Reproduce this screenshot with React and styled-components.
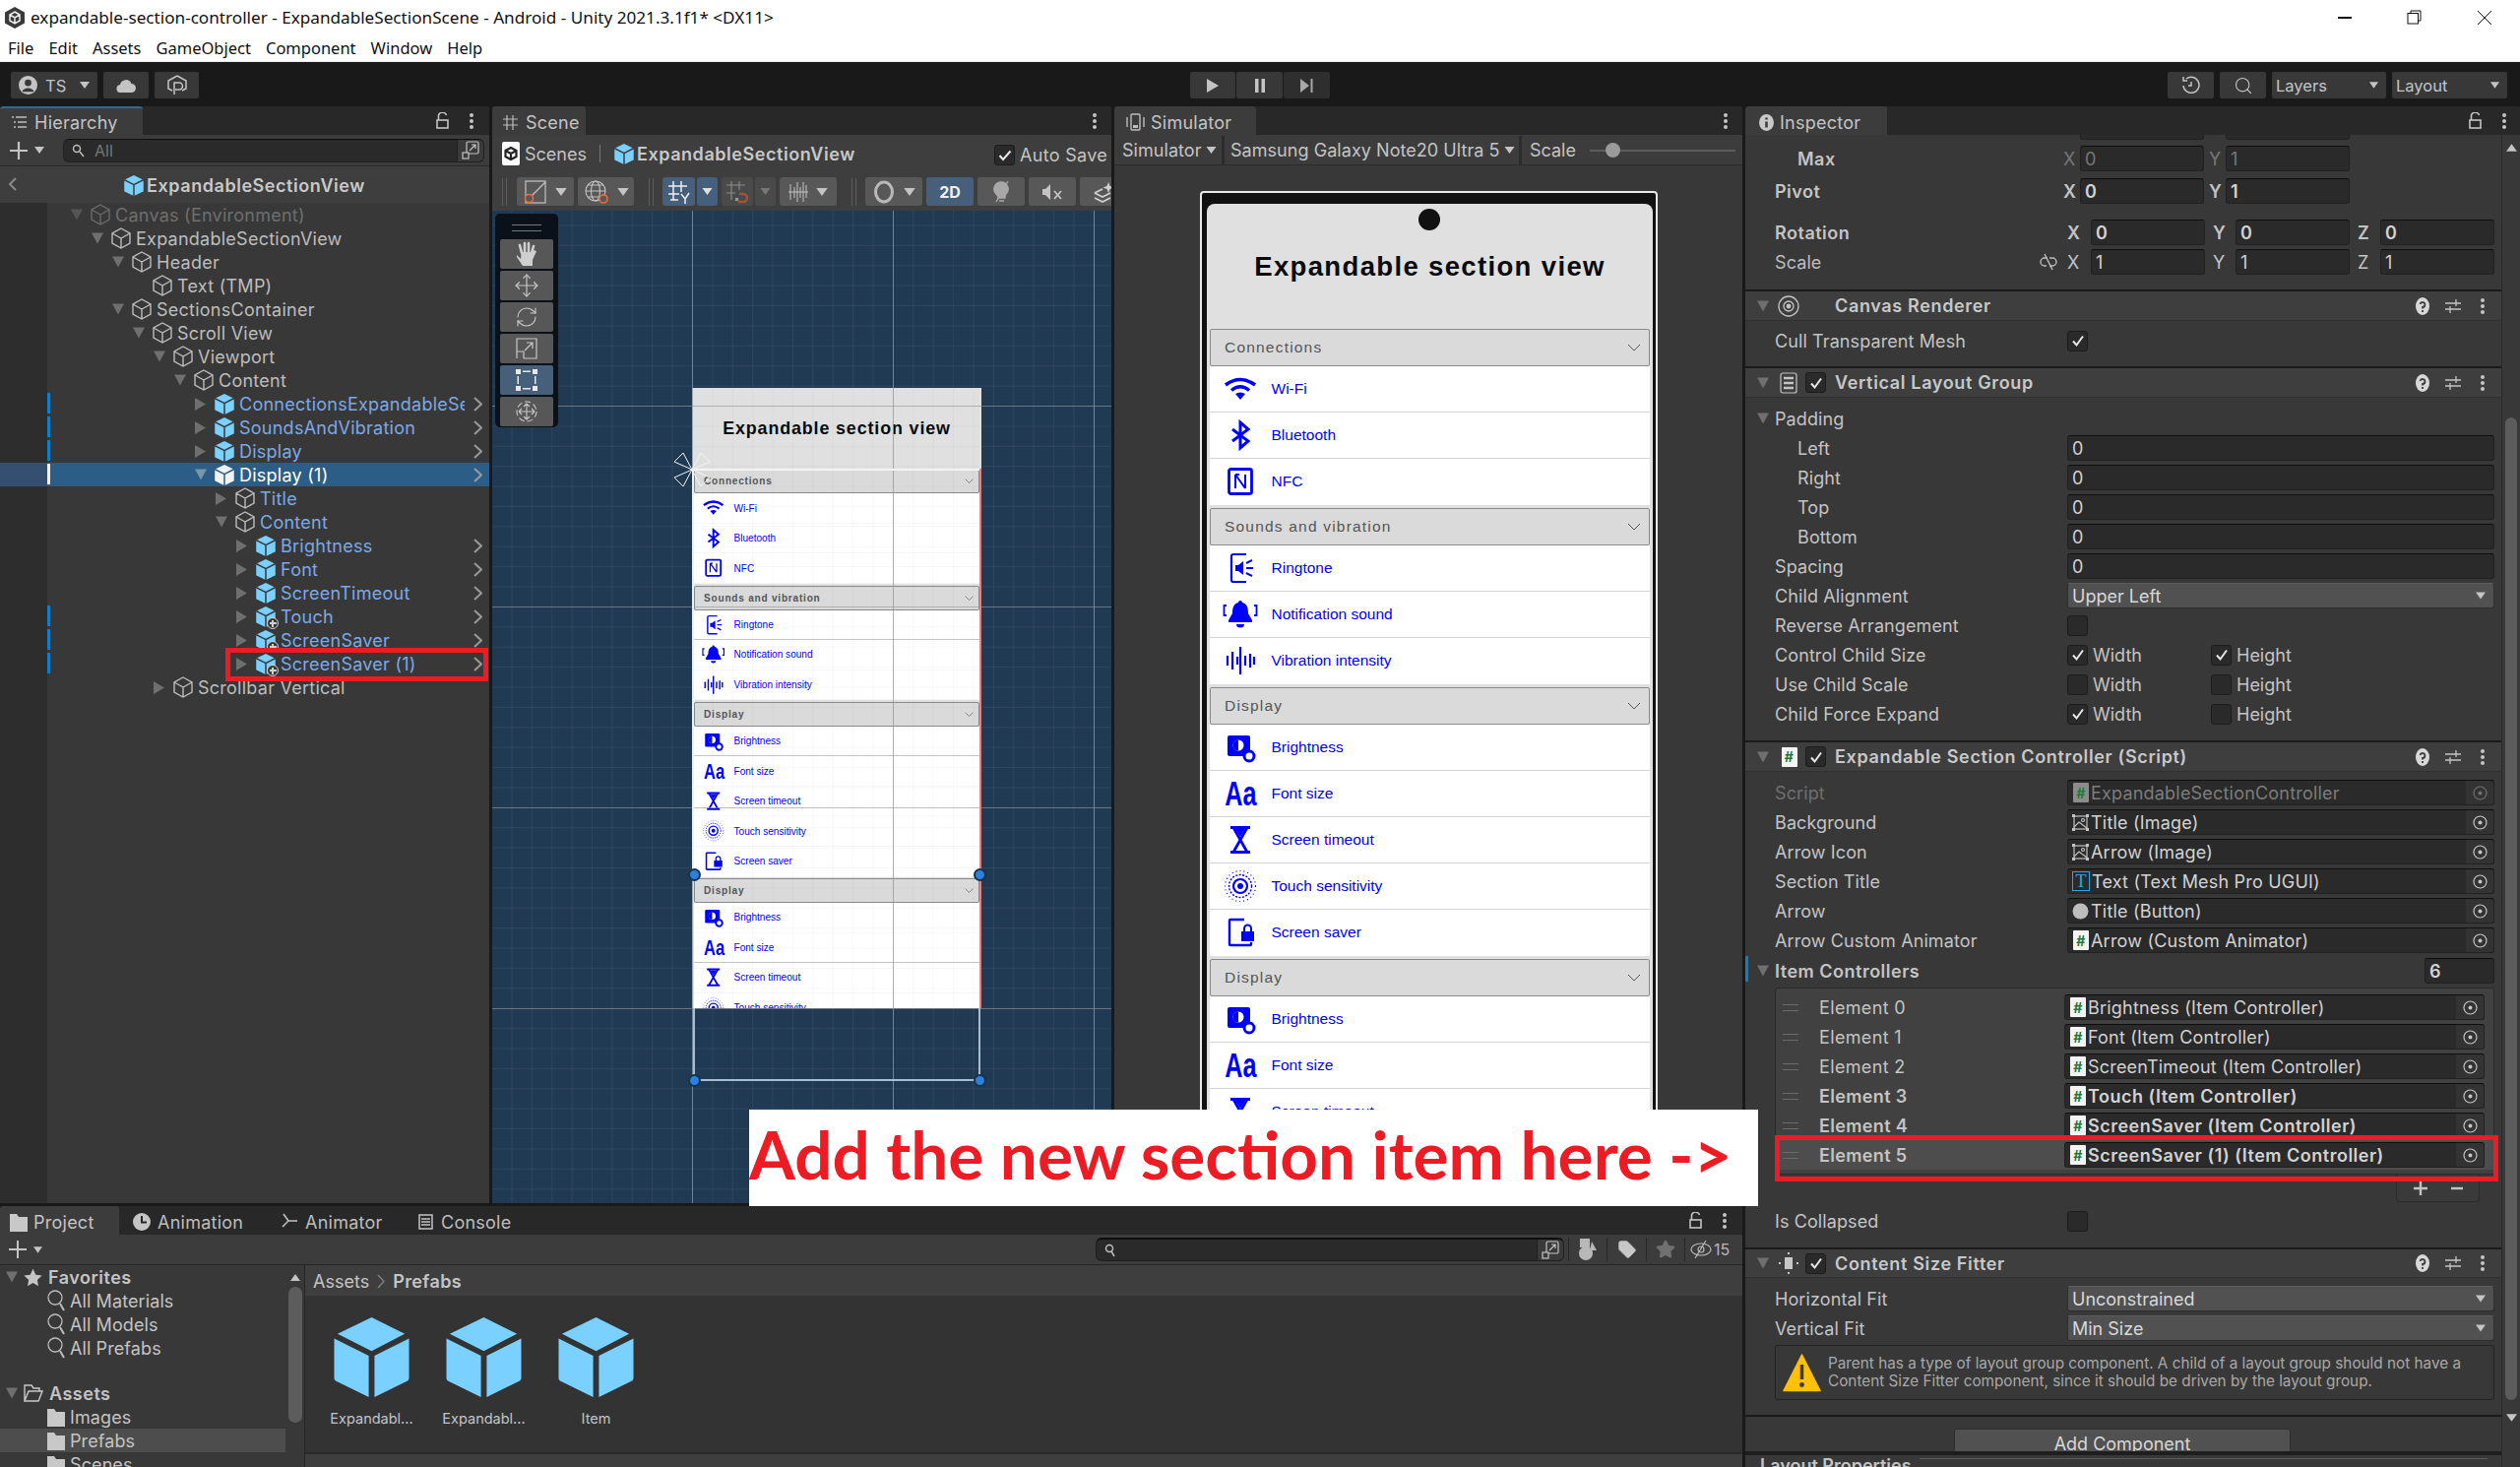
import React from 'react';
import styled, { createGlobalStyle } from 'styled-components';
import { Move, RefreshCw, Search, Star, Tag } from 'lucide-react';

const GlobalStyle = createGlobalStyle`
  html, body { margin: 0; padding: 0; background: #191919; }
  * { box-sizing: border-box; }
`;

const UI = `Inter, "Liberation Sans", sans-serif`;
const SYS = `"Noto Sans", "Open Sans", sans-serif`;
const APP = `"Liberation Sans", Arial, sans-serif`;

const Root = styled.div`
  position: relative; width: 2560px; height: 1490px; overflow: hidden;
  background: #191919; font-family: ${UI}; font-size: 18px; color: #c4c4c4;
  display: flex; flex-direction: column;
`;
const Svg = styled.svg`
  display: block; flex: none;
  width: ${p => p.$w}px; height: ${p => p.$h ?? p.$w}px;
  color: ${p => p.$c || 'inherit'};
`;
const I = ({ w, h, c, vb = '0 0 24 24', sw = 1.5, children }) => (
  <Svg $w={w} $h={h} $c={c} viewBox={vb} fill="none" stroke="currentColor" strokeWidth={sw}>{children}</Svg>
);

/* ---------- shared glyphs ---------- */
const Kebab = ({ c = '#c4c4c4' }) => (
  <Svg $w={4} $h={16} $c={c} viewBox="0 0 4 16" fill="currentColor">
    <circle cx="2" cy="2" r="2" /><circle cx="2" cy="8" r="2" /><circle cx="2" cy="14" r="2" />
  </Svg>
);
const Lock = () => (
  <I w={13} h={17} c="#c4c4c4" vb="0 0 13 17" sw={1.6}>
    <rect x="1" y="8" width="11" height="8" /><path d="M2.5 8V4a4 3.2 0 0 1 8 -1" />
  </I>
);
const Caret = ({ w = 10, h = 7, c = '#c4c4c4' }) => (
  <Svg $w={w} $h={h} $c={c} viewBox="0 0 10 7" fill="currentColor"><path d="M0 0H10L5 7Z" /></Svg>
);
const TriDown = ({ c = '#6f6f6f' }) => (
  <Svg $w={12} $h={12} $c={c} viewBox="0 0 13 12" fill="currentColor"><path d="M0 0H13L6.5 12Z" /></Svg>
);
const TriRight = ({ c = '#6f6f6f' }) => (
  <Svg $w={11} $h={13} $c={c} viewBox="0 0 11 13" fill="currentColor"><path d="M0 0L11 6.5L0 13Z" /></Svg>
);
const CubeOutline = ({ c = '#bdbdbd' }) => (
  <I w={20} h={22} c={c} vb="0 0 20 22" sw={1.4}>
    <path d="M10 1L19 6V16L10 21L1 16V6Z M1 6L10 11L19 6 M10 11V21" />
  </I>
);
const PrefabCube = ({ w = 20, h = 21, c = '#7ad1ff' }) => (
  <Svg $w={w} $h={h} $c={c} viewBox="0 0 79 84" fill="currentColor">
    <path d="M39.5 0L74 17L39.5 35L4 17Z" />
    <path d="M0.5 22L36.5 40V83L2 66Q0.5 65 0.5 63Z" />
    <path d="M78.5 22L42.5 40V83L77 66Q78.5 65 78.5 63Z" />
  </Svg>
);
const PlusBadge = styled.span`
  position: absolute; right: -3px; bottom: -2px; width: 12px; height: 12px; border-radius: 50%;
  background: #3a3a3a; border: 1.5px solid #d0d0d0; display: flex; align-items: center; justify-content: center;
  &::before { content: ''; width: 7px; height: 2px; background: #d0d0d0; position: absolute; }
  &::after { content: ''; width: 2px; height: 7px; background: #d0d0d0; position: absolute; }
`;
const ChevronR = () => (
  <I w={9} h={15} c="#9a9a9a" vb="0 0 9 15" sw={2}><path d="M1 1L8 7.5L1 14" /></I>
);
const ExpandIcon = () => (
  <I w={18} h={19} c="#c4c4c4" vb="0 0 18 19" sw={1.2}>
    <path d="M5 12V2.5A1.5 1.5 0 0 1 6.5 1H15.5A1.5 1.5 0 0 1 17 2.5V11.5A1.5 1.5 0 0 1 15.5 13H7" />
    <rect x="1" y="12" width="6" height="6" /><path d="M8 10L14 4M10 4H14V8" />
  </I>
);

/* ---------- title / menu / toolbar ---------- */
const TitleBar = styled.div`
  height: 33px; background: #fff; display: flex; align-items: center; padding: 2px 0 0 4px; gap: 5px;
  font-family: ${SYS}; font-size: 17.15px; color: #111; flex: none;
`;
const WinControls = styled.div`
  margin-left: auto; display: flex; align-items: center; margin-right: 28px; gap: 56px;
`;
const MenuBar = styled.div`
  height: 30px; background: #fff; border-bottom: 1px solid #ececec; display: flex; align-items: center;
  padding: 2px 0 0 8px; gap: 15px; font-family: ${SYS}; font-size: 16.5px; color: #111; flex: none;
`;
const MainToolbar = styled.div`
  height: 45px; background: #191919; display: flex; align-items: center; padding: 2px 13px 0 11px; flex: none;
`;
const ToolGroup = styled.div`
  display: flex; gap: ${p => p.$gap ?? 6}px; width: ${p => (p.$w ? p.$w + 'px' : 'auto')};
  margin-left: ${p => (p.$auto ? 'auto' : '0')};
`;
const ToolBtn = styled.div`
  height: 27px; width: ${p => p.$w}px; background: ${p => p.$bg || '#383838'}; border-radius: 2px;
  display: flex; align-items: center; gap: 8px; justify-content: ${p => (p.$start ? 'flex-start' : 'center')};
  padding: 0 ${p => (p.$start ? 8 : 0)}px 0 ${p => (p.$start ? p.$pad ?? 8 : 0)}px; color: #c4c4c4; font-size: 16.5px;
`;
const PushRight = styled.span` margin-left: auto; display: flex; `;

/* ---------- panel frame ---------- */
const Workspace = styled.div` display: flex; gap: 3px; flex: 1; min-height: 0; `;
const LeftCol = styled.div` width: 1770px; display: flex; flex-direction: column; gap: 3px; flex: none; `;
const TopRow = styled.div` height: 1114px; display: flex; gap: 3px; flex: none; `;
const Panel = styled.div`
  width: ${p => p.$w}px; background: #383838; display: flex; flex-direction: column;
  overflow: hidden; flex: none; position: relative; border-radius: 3px 3px 0 0;
`;
const TabBar = styled.div`
  height: 29px; background: #282828; display: flex; align-items: center; flex: none; padding-right: ${p => p.$pr ?? 16}px;
`;
const Tab = styled.div`
  height: 29px; width: ${p => p.$w}px; display: flex; align-items: center; gap: ${p => p.$gap ?? 7}px;
  padding-left: ${p => p.$pl ?? 11}px; padding-top: ${p => (p.$blue ? 1 : 3)}px; font-size: 18px; letter-spacing: .25px;
  color: ${p => (p.$on ? '#c4c4c4' : '#bdbdbd')};
  background: ${p => (p.$on ? '#3c3c3c' : 'transparent')};
  border-radius: 3px 3px 0 0; flex: none;
  border-top: ${p => (p.$blue ? '2px solid #2c6a9e' : 'none')};
`;
const TabTools = styled.div` margin-left: auto; display: flex; align-items: center; gap: 21px; `;

/* ---------- hierarchy ---------- */
const HierBar = styled.div`
  height: 32px; background: #3c3c3c; display: flex; align-items: center; padding: 0 5px 0 10px; flex: none;
  border-bottom: 1px solid #2a2a2a;
`;
const PlusDrop = styled.div` display: flex; align-items: center; gap: 7px; width: 54px; flex: none; `;
const SearchBox = styled.div`
  flex: 1; height: 24px; background: #2a2a2a; border-radius: 6px; border: 1px solid #202020; border-top-color: #0f0f0f;
  display: flex; align-items: center; padding-left: 8px; gap: 10px; color: #777; font-size: 16px; overflow: hidden;
`;
const SearchEnd = styled.div`
  margin-left: auto; width: 27px; height: 100%; background: #3a3a3a; display: flex; align-items: center; justify-content: center;
  border-left: 1px solid #202020;
`;
const CrumbBar = styled.div`
  height: 37px; background: #3e3e3e; display: flex; align-items: center; justify-content: center; position: relative;
  font-weight: 600; color: #c8c8c8; gap: 3px; flex: none; letter-spacing: .55px; padding: 2px 0 0 0;
`;
const BackBtn = styled.span` position: absolute; left: 8px; top: 11px; `;
const Tree = styled.div`
  flex: 1; background: linear-gradient(to right, #2d2d2d 48px, #383838 48px); overflow: hidden;
`;
const TreeRow = styled.div`
  position: relative; height: 24px; display: flex; align-items: center; padding-left: ${p => 72 + 21 * p.$d}px; padding-right: 7px;
  background: ${p => (p.$sel ? 'linear-gradient(to right, #354f70 48px, #2c5d87 48px)' : 'none')};
`;
const Marker = styled.span`
  position: absolute; left: 48px; top: 1px; width: 3px; height: 21px; background: ${p => (p.$sel ? '#f0f0f0' : '#0a80c8')};
`;
const ArrowSlot = styled.span` width: 20px; flex: none; display: flex; align-items: center; `;
const CubeWrap = styled.span` position: relative; width: 20px; height: 22px; flex: none; display: flex; align-items: center; `;
const TreeLabel = styled.span`
  margin: 0 ${p => (p.$clip ? 9 : 0)}px 0 5px; flex: 1; overflow: hidden; white-space: nowrap; font-size: 18px; letter-spacing: .25px;
  color: ${p => p.$c};
`;
const RedBox = styled.div`
  position: absolute; border: 5px solid #ed1c24; pointer-events: none; z-index: 3;
  left: ${p => p.$l}px; right: ${p => p.$r}px; top: ${p => p.$t}px; bottom: ${p => p.$b}px;
`;

const treeData = [
  ['d', 0, 'Canvas (Environment)', 'env'], ['d', 1, 'ExpandableSectionView'], ['d', 2, 'Header'], ['n', 3, 'Text (TMP)'],
  ['d', 2, 'SectionsContainer'], ['d', 3, 'Scroll View'], ['d', 4, 'Viewport'], ['d', 5, 'Content'],
  ['r', 6, 'ConnectionsExpandableSection', 'prefab', 'm'], ['r', 6, 'SoundsAndVibration', 'prefab', 'm'], ['r', 6, 'Display', 'prefab', 'm'],
  ['d', 6, 'Display (1)', 'sel', 'm'], ['r', 7, 'Title', 'inner'], ['d', 7, 'Content', 'inner'],
  ['r', 8, 'Brightness', 'prefab'], ['r', 8, 'Font', 'prefab'], ['r', 8, 'ScreenTimeout', 'prefab'],
  ['r', 8, 'Touch', 'added', 'm'], ['r', 8, 'ScreenSaver', 'added', 'm'], ['r', 8, 'ScreenSaver (1)', 'added', 'm', 'red'],
  ['r', 4, 'Scrollbar Vertical'],
];
const treeColor = k => ({ env: '#6e6e6e', prefab: '#7ca9e6', added: '#7ca9e6', inner: '#7ca9e6', sel: '#ffffff' }[k] || '#bdbdbd');

const Hierarchy = () => (
  <Panel $w={497}>
    <TabBar>
      <Tab $w={145} $on $blue $gap={8} $pl={11}>
        <I w={16} h={13} c="#bdbdbd" vb="0 0 16 13" sw={1.3}><path d="M1 1H3M5 1H16M3 6H5M7 6H16M3 11H5M7 11H16" /></I>
        Hierarchy
      </Tab>
      <TabTools><Lock /><Kebab /></TabTools>
    </TabBar>
    <HierBar>
      <PlusDrop>
        <I w={18} h={18} c="#c4c4c4" vb="0 0 18 18" sw={2.2}><path d="M9 0V18M0 9H18" /></I>
        <Caret />
      </PlusDrop>
      <SearchBox>
        <I w={13} h={14} c="#bdbdbd" vb="0 0 13 14" sw={1.5}><circle cx="5" cy="5" r="3.5" /><path d="M8 8L12 13" /></I>
        All
        <SearchEnd><ExpandIcon /></SearchEnd>
      </SearchBox>
    </HierBar>
    <CrumbBar>
      <BackBtn><I w={9} h={14} c="#8a8a8a" vb="0 0 9 14" sw={2}><path d="M8 1L2 7L8 13" /></I></BackBtn>
      <PrefabCube />
      ExpandableSectionView
    </CrumbBar>
    <Tree>
      {treeData.map(([a, d, t, k, m, red], i) => (
        <TreeRow key={i} $d={d} $sel={k === 'sel'}>
          {m && <Marker $sel={k === 'sel'} />}
          <ArrowSlot>
            {a === 'd' && <TriDown c={k === 'sel' ? '#7d93a8' : k === 'env' ? '#555' : '#6f6f6f'} />}
            {a === 'r' && <TriRight />}
          </ArrowSlot>
          <CubeWrap>
            {k === 'prefab' && <PrefabCube />}
            {k === 'sel' && <PrefabCube c="#f2f2f2" />}
            {k === 'added' && <><PrefabCube /><PlusBadge /></>}
            {(!k || k === 'inner') && <CubeOutline />}
            {k === 'env' && <CubeOutline c="#6a6a6a" />}
          </CubeWrap>
          <TreeLabel $c={treeColor(k)} $clip={t.length > 24}>{t}</TreeLabel>
          {['prefab', 'added', 'sel'].includes(k) && <ChevronR />}
          {red && <RedBox $l={229} $r={1} $t={-4} $b={-6} />}
        </TreeRow>
      ))}
    </Tree>
  </Panel>
);

/* ---------- mini phone list (used at two scales) ---------- */
const Screen = styled.div`
  background: #e0e0e0; position: relative; font-family: ${APP};
  width: ${p => p.$width}px;
  border-radius: ${p => (p.$s === 1 ? '8px 8px 0 0' : '0')};
  padding: 0 ${p => 3 * p.$s}px; overflow: hidden; height: ${p => p.$height}px;
`;
const ScreenHead = styled.div`
  height: ${p => 127 * p.$s}px; display: flex; align-items: center; justify-content: center;
  font-weight: 700; font-size: ${p => 27.5 * p.$s}px; letter-spacing: ${p => 1.35 * p.$s}px; color: #0a0a0a;
`;
const SecHead = styled.div`
  height: ${p => 38 * p.$s}px; background: #dadada; border: 1px solid #8a8a8a; border-radius: 2px;
  margin-top: ${p => (p.$first ? 0 : 3 * p.$s)}px;
  display: flex; align-items: center; padding: 0 ${p => 8 * p.$s}px 0 ${p => 14 * p.$s}px;
  font-size: ${p => 15.5 * p.$s}px; letter-spacing: ${p => 1.2 * p.$s}px; color: #555; font-weight: ${p => (p.$s < 1 ? 700 : 400)};
`;
const ItemRow = styled.div`
  height: ${p => 47 * p.$s}px; background: #fff; display: flex; align-items: center; color: #0000ff;
  padding-left: ${p => 13 * p.$s}px; gap: ${p => 13.5 * p.$s}px; font-size: ${p => 15.5 * p.$s}px;
  border-bottom: 1px solid ${p => p.$line};
`;
const ItemIconBox = styled.span`
  width: ${p => 36 * p.$s}px; height: ${p => 36 * p.$s}px; flex: none; display: flex; align-items: center; justify-content: center;
`;
const AaGlyph = styled.span`
  font-weight: 700; font-size: ${p => 35 * p.$s}px; letter-spacing: 0; transform: scaleX(.72); display: block; white-space: nowrap;
`;
const itemGlyph = {
  wifi: <><path d="M3 14Q18 3 33 14" strokeWidth="3.6" /><path d="M9 19.5Q18 12 27 19.5" strokeWidth="3.2" /><path fill="currentColor" stroke="none" d="M13 23Q18 20 23 23L18 29Z" /></>,
  bt: <path d="M10 12L26 24L18 31V5L26 12L10 24" strokeWidth="3" />,
  nfc: <><rect x="6.5" y="5.5" width="23" height="25" rx="2" strokeWidth="2.8" /><path d="M13 11V25M13 11L23 25M23 11V25M13 11H17" strokeWidth="2" /></>,
  ring: <><path d="M24 4H11A2 2 0 0 0 9 6V30A2 2 0 0 0 11 32H24" strokeWidth="2.2" /><path fill="currentColor" stroke="none" d="M13 15H16L21 11V25L16 21H13Z" /><path d="M24 13L30 10M24 18H31M24 23L30 26" strokeWidth="2" /></>,
  bell: <><path fill="currentColor" stroke="none" d="M18 4A2 2 0 0 1 20 6C25 7 26 12 26 17L30 24V26H6V24L10 17C10 12 11 7 16 6A2 2 0 0 1 18 4ZM14 28H22A4 3.5 0 0 1 14 28Z" /><path d="M4 9H1.5V19H4M32 9H34.5V19H32" strokeWidth="1.8" /></>,
  vib: <path d="M5 13V23M10 9V27M15 14V22M18 4V32M23 13V23M28 11V25M32 14V22" strokeWidth="2.2" />,
  bright: <><rect x="5" y="6" width="23" height="21" rx="2" fill="currentColor" stroke="none" /><circle cx="16" cy="16" r="5.5" fill="#fff" stroke="none" /><path d="M16 10.5A5.5 5.5 0 0 0 16 21.5Z" fill="currentColor" stroke="none" /><circle cx="27" cy="27" r="5" fill="#fff" strokeWidth="3" /></>,
  glass: <><path d="M8 5.5H28M8 30.5H28" strokeWidth="3" /><path d="M11 5.5L25 30.5M25 5.5L11 30.5" strokeWidth="2.8" /><path fill="currentColor" stroke="none" d="M13 7H23L18 15Z" /></>,
  touch: <><circle cx="18" cy="18" r="3" fill="currentColor" stroke="none" /><circle cx="18" cy="18" r="7" strokeWidth="2.2" /><circle cx="18" cy="18" r="11.5" strokeWidth="1.4" strokeDasharray="2 1.5" /><circle cx="18" cy="18" r="15.5" strokeWidth="1.2" strokeDasharray="1 3" /></>,
  saver: <><path d="M22 5H8A1 1 0 0 0 7 6V30A1 1 0 0 0 8 31H28A1 1 0 0 0 29 30V28" strokeWidth="2.4" /><path fill="currentColor" stroke="none" d="M19 17H32V27H19Z" /><path d="M22 17V14A3.5 3.5 0 0 1 29 14V17" strokeWidth="2" /></>,
};
const display = [['bright', 'Brightness'], ['font', 'Font size'], ['glass', 'Screen timeout'], ['touch', 'Touch sensitivity'], ['saver', 'Screen saver']];
const sections = [
  { title: 'Connections', items: [['wifi', 'Wi-Fi'], ['bt', 'Bluetooth'], ['nfc', 'NFC']] },
  { title: 'Sounds and vibration', items: [['ring', 'Ringtone'], ['bell', 'Notification sound'], ['vib', 'Vibration intensity']] },
  { title: 'Display', items: display },
  { title: 'Display', items: display },
];
const miniStrong = ['1-0', '2-0', '3-1'];
const PhoneScreen = ({ s, width, height, children }) => (
  <Screen $s={s} $width={width} $height={height}>
    {children}
    <ScreenHead $s={s}>Expandable section view</ScreenHead>
    {sections.map((sec, si) => (
      <div key={si}>
        <SecHead $s={s} $first={si === 0}>
          {sec.title}
          <PushRight><I w={14 * s} h={8 * s} c="#555" vb="0 0 14 8" sw={1}><path d="M1 1L7 7L13 1" /></I></PushRight>
        </SecHead>
        {sec.items.map(([k, label], ii) => (
          <ItemRow key={ii} $s={s} $line={s === 1 ? (ii === sec.items.length - 1 ? '#fff' : '#d4d4d4') : miniStrong.includes(si + '-' + ii) ? '#c4c4c4' : '#f6f6f6'}>
            <ItemIconBox $s={s}>
              {k === 'font' ? <AaGlyph $s={s}>Aa</AaGlyph> : <I w={36 * s} h={36 * s} vb="0 0 36 36">{itemGlyph[k]}</I>}
            </ItemIconBox>
            {label}
          </ItemRow>
        ))}
      </div>
    ))}
  </Screen>
);

/* ---------- scene ---------- */
const SceneCrumbs = styled.div`
  height: 38px; background: #3e3e3e; display: flex; align-items: center; padding: 0 4px 0 10px; flex: none; color: #c4c4c4;
`;
const SceneDoc = styled.span`
  width: 18px; height: 24px; background: #fff; border-radius: 2px; display: flex; align-items: center; justify-content: center; flex: none; margin-right: 5px;
`;
const VLine = styled.span` width: 1px; height: 18px; background: #777; margin: 0 14px 0 13px; flex: none; `;
const BoldCrumb = styled.span` font-weight: 600; margin-left: 3px; color: #c8c8c8; letter-spacing: .55px; `;
const SmallCheck = styled.span`
  width: ${p => p.$size ?? 21}px; height: ${p => p.$size ?? 21}px; background: #2a2a2a; border: 1px solid #1c1c1c; border-radius: 3px; flex: none;
  display: flex; align-items: center; justify-content: center;
`;
const AutoSave = styled.span` margin-left: auto; display: flex; align-items: center; gap: 5px; margin-top: 3px; letter-spacing: .3px; white-space: nowrap; `;
const SceneTools = styled.div`
  height: 39px; background: #3e3e3e; display: flex; align-items: center; padding: 5px 0 5px 10px; flex: none; overflow: hidden;
`;
const Grip = styled.span`
  width: 5px; height: 28px; border-left: 1px solid #5c5c5c; border-right: 1px solid #5c5c5c; flex: none;
  margin: ${p => p.$m};
`;
const SBtn = styled.span`
  height: 29px; width: ${p => p.$w}px; background: ${p => (p.$on ? '#46607c' : p.$dim ? '#4a4a4a' : '#585858')}; border-radius: 3px; flex: none;
  margin-right: ${p => p.$mr ?? 4}px; display: flex; align-items: center; justify-content: center; gap: 8px;
  color: ${p => (p.$on ? '#f0f0f0' : '#c4c4c4')}; font-weight: 700; font-size: 16px;
`;
const Viewport = styled.div`
  flex: 1; position: relative; overflow: hidden; background-color: #213a54;
  background-image:
    linear-gradient(to right, rgba(255,255,255,.035) 1px, transparent 1px),
    linear-gradient(to bottom, rgba(255,255,255,.035) 1px, transparent 1px);
  background-size: 20.4px 20.4px;
  background-position: 203px 198px;
`;
const GridOverlay = styled.div`
  position: absolute; inset: 0; pointer-events: none; z-index: 2;
  background-image:
    linear-gradient(to right, rgba(150,150,150,.75) 1px, transparent 1px),
    linear-gradient(to bottom, rgba(150,150,150,.6) 1px, transparent 1px),
    linear-gradient(to right, rgba(120,120,120,.06) 1px, transparent 1px),
    linear-gradient(to bottom, rgba(120,120,120,.06) 1px, transparent 1px);
  background-size: 204px 204px, 204px 204px, 20.4px 20.4px, 20.4px 20.4px;
  background-position: 203px 0, 0 198px, 203px 0, 0 198px;
`;
const PreviewPos = styled.div` position: absolute; left: 203px; top: 180px; `;
const SelLine = styled.div`
  position: absolute; z-index: 3; background: ${p => p.$c};
  left: ${p => p.$x}px; top: ${p => p.$y}px; width: ${p => p.$w}px; height: ${p => p.$h}px;
`;
const Handle = styled.span`
  position: absolute; z-index: 4; width: 13px; height: 13px; border-radius: 50%;
  background: #2d7fe0; border: 2px solid #14344f; left: ${p => p.$x - 6}px; top: ${p => p.$y - 6}px;
`;
const StarGizmo = styled.div` position: absolute; z-index: 4; left: 184px; top: 244px; `;
const GizmoStrip = styled.div`
  position: absolute; left: 3px; top: 3px; width: 64px; height: 217px; background: #0a1118; border-radius: 5px; z-index: 5;
  padding: 11px 5px 0; display: flex; flex-direction: column; gap: 2px;
`;
const GizmoGrip = styled.div`
  height: 7px; margin: 0 12px 6px; border-top: 1px solid #777; border-bottom: 1px solid #777; flex: none;
`;
const GizmoBtn = styled.div`
  height: 30px; flex: none; background: ${p => (p.$on ? '#46607c' : '#575757')}; border-radius: 2px; color: #c8c8c8;
  display: flex; align-items: center; justify-content: center;
`;

const Scene = () => (
  <Panel $w={629}>
    <TabBar $pr={15}>
      <Tab $w={95} $on $gap={8} $pl={11}>
        <I w={15} h={15} c="#bdbdbd" vb="0 0 15 15" sw={1.2}><path d="M4 0V15M10 0V15M0 4H15M0 10H15" /></I>
        Scene
      </Tab>
      <TabTools><Kebab /></TabTools>
    </TabBar>
    <SceneCrumbs>
      <SceneDoc><I w={14} h={14} c="#222" vb="0 0 14 14" sw={2.2}><path d="M7 1L12.5 4V10L7 13L1.5 10V4Z M1.5 4L7 7L12.5 4M7 7V13" /></I></SceneDoc>
      Scenes
      <VLine />
      <PrefabCube />
      <BoldCrumb>ExpandableSectionView</BoldCrumb>
      <AutoSave>
        <SmallCheck><I w={14} h={12} c="#e8e8e8" vb="0 0 14 12" sw={2}><path d="M1.5 6L5 10L12.5 1.5" /></I></SmallCheck>
        Auto Save
      </AutoSave>
    </SceneCrumbs>
    <SceneTools>
      <Grip $m="0 10px 0 0" />
      <SBtn $w={58}>
        <Svg $w={24} $h={26} viewBox="0 0 24 26" fill="none" stroke="currentColor">
          <rect x="2" y="2" width="20" height="22" strokeWidth="1.2" /><path d="M22 3L7 18" strokeWidth="1.2" /><circle cx="5.5" cy="19.5" r="4" stroke="#f26a35" strokeWidth="1.6" fill="#585858" />
        </Svg>
        <Caret w={12} h={8} />
      </SBtn>
      <SBtn $w={57}>
        <Svg $w={26} $h={26} viewBox="0 0 26 26" fill="none" stroke="currentColor" strokeWidth="1.1">
          <circle cx="12" cy="12" r="10" /><ellipse cx="12" cy="12" rx="4.5" ry="10" /><path d="M2 12H22M4 6H20M4 18H20" /><circle cx="20" cy="20" r="4" stroke="#f26a35" strokeWidth="1.6" fill="#585858" />
        </Svg>
        <Caret w={12} h={8} />
      </SBtn>
      <Grip $m="0 9px 0 11px" />
      <SBtn $w={33} $on $mr={2}>
        <I w={24} h={24} c="#f0f0f0" sw={1.5}><path d="M6 1V20M14 1V12M1 6H20M1 14H12M14 14L18 19L22 13M18 19V24M3 20H11" /></I>
      </SBtn>
      <SBtn $w={21} $on><Caret w={11} h={7} c="#e0e0e0" /></SBtn>
      <SBtn $w={32} $dim $mr={2}>
        <Svg $w={24} $h={24} viewBox="0 0 24 24" fill="none" stroke="#8d8d8d" strokeWidth="1.1">
          <path d="M6 1V20M14 1V10M1 5H20M1 13H10" /><path d="M14 14H18A4 4 0 0 1 18 22H13" stroke="#a65334" strokeWidth="2.4" /><rect x="10" y="18" width="3" height="3" fill="#9a9a9a" stroke="none" />
        </Svg>
      </SBtn>
      <SBtn $w={21} $dim><Caret w={11} h={7} c="#777" /></SBtn>
      <SBtn $w={58}>
        <I w={20} h={24} vb="0 0 20 24" sw={1}><path d="M0 12H20M2 4V20M6 7V18M9 2V22M12 7V18M15 2V22M18 5V18" /></I>
        <Caret w={12} h={8} />
      </SBtn>
      <Grip $m="0 9px 0 11px" />
      <SBtn $w={58}>
        <I w={24} h={24} c="#b9b9b9" sw={3}><ellipse cx="12" cy="12" rx="8.5" ry="10" /></I>
        <Caret w={12} h={8} />
      </SBtn>
      <SBtn $w={48} $on>2D</SBtn>
      <SBtn $w={48}>
        <I w={20} h={24} c="#a8a8a8" vb="0 0 20 24" sw={1.4}>
          <path fill="currentColor" d="M10 2A7 7 0 0 1 15 14C14 15 14 17 14 18H7C7 16 6 15 5 14A7 7 0 0 1 10 2Z" /><path d="M8 21H13M17 1L5 22" />
        </I>
      </SBtn>
      <SBtn $w={48}>
        <Svg $w={22} $h={20} viewBox="0 0 22 20" fill="currentColor" stroke="currentColor">
          <path d="M1 7H4L9 2V18L4 13H1Z" stroke="none" /><path d="M13 9L20 17M20 9L13 17" strokeWidth="1.8" fill="none" />
        </Svg>
      </SBtn>
      <SBtn $w={48}>
        <I w={22} h={24} c="#d0d0d0" vb="0 0 22 24" sw={1.8}>
          <path d="M2 13L10 17L18 13M2 18L10 22L18 18M2 13L10 9" /><path fill="currentColor" stroke="none" d="M16 2L17.5 6L21.5 7.5L17.5 9L16 13L14.5 9L10.5 7.5L14.5 6Z" />
        </I>
      </SBtn>
    </SceneTools>
    <Viewport>
      <PreviewPos><PhoneScreen s={0.65} width={294} height={630} /></PreviewPos>
      <GridOverlay />
      <SelLine $c="#f4f4f4" $x={203} $y={262} $w={294} $h={2} />
      <SelLine $c="#f0f0f0" $x={203} $y={262} $w={2} $h={414} />
      <SelLine $c="#f27c7c" $x={495} $y={262} $w={2} $h={548} />
      <SelLine $c="#a9bdd0" $x={204} $y={810} $w={2} $h={73} />
      <SelLine $c="#a9bdd0" $x={494} $y={810} $w={2} $h={73} />
      <SelLine $c="#a9bdd0" $x={204} $y={882} $w={291} $h={2} />
      <Handle $x={205} $y={674} /><Handle $x={495} $y={674} />
      <Handle $x={205} $y={883} /><Handle $x={495} $y={883} />
      <StarGizmo>
        <I w={38} h={38} c="#f4f4f4" vb="0 0 38 38" sw={1}>
          <path d="M19 19L28 2L37 11ZM19 19L10 2L1 11ZM19 19L28 36L37 27ZM19 19L10 36L1 27Z" />
        </I>
      </StarGizmo>
      <GizmoStrip>
        <GizmoGrip />
        <GizmoBtn>
          <Svg $w={24} $h={26} $c="#cfcfcf" viewBox="0 0 24 26" fill="currentColor" stroke="currentColor">
            <path d="M7 12L5 4M10 11V2M14 11V2M17 12L19 5" strokeWidth="2.6" strokeLinecap="round" fill="none" />
            <path d="M2 14L6 18L6.500 11H17.500L19 9L22 10L18 19V25H8L2 16Z" stroke="none" />
          </Svg>
        </GizmoBtn>
        <GizmoBtn><Move size={26} strokeWidth={1.1} /></GizmoBtn>
        <GizmoBtn><RefreshCw size={24} strokeWidth={1.1} /></GizmoBtn>
        <GizmoBtn>
          <I w={22} h={22} vb="0 0 22 22" sw={1.2}><path d="M1 21V1H21V21H8M1 14H8V21M9 13L17 5M11 5H17V11" /></I>
        </GizmoBtn>
        <GizmoBtn $on>
          <Svg $w={24} $h={24} viewBox="0 0 24 24" fill="#e8e8e8">
            <rect x="1" y="1" width="5" height="5" /><rect x="18" y="1" width="5" height="5" /><rect x="1" y="18" width="5" height="5" /><rect x="18" y="18" width="5" height="5" />
            <rect x="8" y="2.5" width="8" height="1.5" /><rect x="8" y="20" width="8" height="1.5" /><rect x="2.5" y="8" width="1.5" height="8" /><rect x="20" y="8" width="1.5" height="8" />
          </Svg>
        </GizmoBtn>
        <GizmoBtn>
          <I w={26} h={26} vb="0 0 26 26" sw={1.1}><circle cx="13" cy="13" r="10" strokeDasharray="6 3" /><path d="M13 5V21M5 13H21M13 5L10 8M13 5L16 8M13 21L10 18M13 21L16 18M5 13L8 10M5 13L8 16M21 13L18 10M21 13L18 16" /></I>
        </GizmoBtn>
      </GizmoStrip>
    </Viewport>
  </Panel>
);

/* ---------- simulator ---------- */
const SimTools = styled.div`
  height: 31px; background: #3c3c3c; display: flex; align-items: center; flex: none; padding: 1px 0 0 2px; border-bottom: 1px solid #2a2a2a;
`;
const SimDrop = styled.span`
  height: 100%; width: ${p => p.$w}px; display: flex; align-items: center; gap: 4px; padding-left: 6px; flex: none;
  border-right: 3px solid #2c2c2c; white-space: nowrap; letter-spacing: .05px;
`;
const ScaleWrap = styled.span` display: flex; align-items: center; padding-left: 8px; flex: 1; gap: 14px; `;
const Slider = styled.span` position: relative; width: 148px; height: 2px; background: #5c5c5c; flex: none; `;
const SliderThumb = styled.span`
  position: absolute; left: 16px; top: -7px; width: 15px; height: 15px; border-radius: 50%; background: #9a9a9a;
`;
const SimView = styled.div` flex: 1; padding: 26px 0 0 87px; overflow: hidden; `;
const Phone = styled.div`
  width: 465px; height: 1000px; background: #111; border: 2px solid #e8e8e8; border-radius: 4px; padding: 11px 4px 0 5px;
`;
const Camera = styled.span`
  position: absolute; left: 215px; top: 5px; width: 22px; height: 22px; border-radius: 50%; background: #111;
`;
const Simulator = () => (
  <Panel $w={638}>
    <TabBar $pr={15}>
      <Tab $w={144} $on $gap={6} $pl={12}>
        <I w={19} h={18} c="#bdbdbd" vb="0 0 19 18" sw={1.4}>
          <rect x="5" y="1" width="9" height="16" rx="1" /><path d="M1 4V14M18 4V14" /><rect x="7" y="12" width="5" height="3" fill="currentColor" stroke="none" />
        </I>
        Simulator
      </Tab>
      <TabTools><Kebab /></TabTools>
    </TabBar>
    <SimTools>
      <SimDrop $w={110}>Simulator<Caret w={11} h={7} /></SimDrop>
      <SimDrop $w={302}>Samsung Galaxy Note20 Ultra 5<Caret w={11} h={7} /></SimDrop>
      <ScaleWrap>Scale<Slider><SliderThumb /></Slider></ScaleWrap>
    </SimTools>
    <SimView>
      <Phone>
        <PhoneScreen s={1} width={453} height={1100}><Camera /></PhoneScreen>
      </Phone>
    </SimView>
  </Panel>
);

/* ---------- project ---------- */
const ProjectBar = styled.div`
  height: 31px; background: #3c3c3c; display: flex; align-items: center; padding: 0 8px 0 9px; border-bottom: 1px solid #262626; flex: none;
`;
const ProjSearch = styled.div`
  margin: 0 4px 0 auto; width: 476px; height: 24px; background: #2a2a2a; border-radius: 6px; border: 1px solid #1f1f1f; border-top: 2px solid #0e0e0e;
  display: flex; align-items: center; padding-left: 8px; overflow: hidden; flex: none;
`;
const FilterBtn = styled.span`
  width: ${p => p.$w ?? 39}px; height: 24px; display: flex; align-items: center; justify-content: center; border-left: 1px solid #262626; flex: none; gap: 2px; color: #b8b8b8;
  font-size: 16px;
`;
const ProjBody = styled.div` flex: 1; display: flex; min-height: 0; `;
const Side = styled.div`
  width: 290px; background: #383838; flex: none; overflow: hidden; padding-top: 0;
`;
const SideRow = styled.div`
  height: 24px; display: flex; align-items: center; gap: ${p => p.$gap ?? 5}px; padding-left: ${p => p.$pl}px; flex: none;
  background: ${p => (p.$sel ? '#4d4d4d' : 'none')}; font-weight: ${p => (p.$bold ? 600 : 400)}; margin-top: ${p => p.$mt ?? 0}px;
  letter-spacing: ${p => (p.$bold ? '.5px' : '.1px')};
`;
const SideBar = styled.div`
  width: 20px; background: #383838; flex: none; border-right: 1px solid #262626; display: flex; flex-direction: column; align-items: center; padding: 9px 0 0 0;
`;
const SideThumb = styled.div` width: 14px; height: 138px; background: #5c5c5c; border-radius: 7px; margin-top: 6px; `;
const ProjMain = styled.div` flex: 1; display: flex; flex-direction: column; min-width: 0; `;
const ProjCrumb = styled.div`
  height: 31px; background: #3e3e3e; display: flex; align-items: center; padding: 2px 0 0 8px; gap: 8px; flex: none;
`;
const BoldSpan = styled.span` font-weight: 600; letter-spacing: .4px; `;
const Thumbs = styled.div` height: 159px; background: #333; display: flex; padding: 21px 0 0 29px; flex: none; gap: 37px; `;
const Thumb = styled.div`
  width: 77px; display: flex; flex-direction: column; align-items: center; font-size: 14.5px; gap: 11px; color: #c4c4c4; white-space: nowrap;
`;
const ProjFoot = styled.div` flex: 1; background: #3e3e3e; border-top: 2px solid #2a2a2a; `;
const Folder = () => (
  <Svg $w={18} $h={20} $c="#c8c8c8" viewBox="0 0 18 20" fill="currentColor"><path d="M0 2H7L9 5H18V20H0Z" /></Svg>
);
const Mag = () => (
  <I w={18} h={24} c="#bdbdbd" vb="0 0 18 24" sw={1.3}><circle cx="8" cy="9" r="7" /><path d="M13 15L17 22" strokeWidth="2" /></I>
);
const Project = () => (
  <Panel $w={1770}>
    <TabBar>
      <Tab $w={121} $on $gap={6} $pl={10}>
        <Folder />
        Project
      </Tab>
      <Tab $w={145} $gap={7} $pl={14}>
        <Svg $w={18} $h={18} $c="#c4c4c4" viewBox="0 0 18 18">
          <circle cx="9" cy="9" r="9" fill="currentColor" /><path d="M9 3V9.5H14" stroke="#282828" strokeWidth="2" fill="none" />
        </Svg>
        Animation
      </Tab>
      <Tab $w={140} $gap={7} $pl={20}>
        <I w={17} h={18} c="#c4c4c4" vb="0 0 17 18" sw={1.5}><path d="M2 1L7 8L1 14M7 8H16" /></I>
        Animator
      </Tab>
      <Tab $w={120} $gap={8} $pl={19}>
        <I w={15} h={16} c="#c4c4c4" vb="0 0 15 16" sw={1.5}><rect x="1" y="1" width="13" height="14" /><path d="M3 5H12M3 8H12M3 11H12" /></I>
        Console
      </Tab>
      <TabTools><Lock /><Kebab /></TabTools>
    </TabBar>
    <ProjectBar>
      <PlusDrop>
        <I w={18} h={18} c="#c4c4c4" vb="0 0 18 18" sw={2}><path d="M9 0V18M0 9H18" /></I>
        <Caret w={9} h={7} />
      </PlusDrop>
      <ProjSearch>
        <I w={11} h={14} c="#bdbdbd" vb="0 0 11 14" sw={1.5}><circle cx="5" cy="5" r="3.5" /><path d="M7 8L10 13" /></I>
        <SearchEnd><ExpandIcon /></SearchEnd>
      </ProjSearch>
      <FilterBtn>
        <Svg $w={20} $h={24} viewBox="0 0 20 24" fill="currentColor"><circle cx="8" cy="16" r="7" /><rect x="2" y="1" width="10" height="9" /><path d="M14 4L19 13H12Z" /></Svg>
      </FilterBtn>
      <FilterBtn $w={40}><Tag size={20} fill="#c8c8c8" strokeWidth={1} /></FilterBtn>
      <FilterBtn><Star size={20} fill="#707070" color="#707070" /></FilterBtn>
      <FilterBtn $w={51}>
        <I w={22} h={18} vb="0 0 22 18" sw={1.2}><ellipse cx="11" cy="9" rx="10" ry="6" /><circle cx="11" cy="9" r="3" /><path d="M16 0L5 18" /></I>
        15
      </FilterBtn>
    </ProjectBar>
    <ProjBody>
      <Side>
        <SideRow $pl={6} $gap={6} $bold>
          <TriDown /><Svg $w={19} $h={19} $c="#c4c4c4" viewBox="0 0 24 24" fill="currentColor"><path d="M12 1L15.5 8.5L23.5 9.5L17.5 15L19 23L12 19L5 23L6.5 15L.5 9.5L8.5 8.5Z" /></Svg>Favorites
        </SideRow>
        <SideRow $pl={48}><Mag />All Materials</SideRow>
        <SideRow $pl={48}><Mag />All Models</SideRow>
        <SideRow $pl={48}><Mag />All Prefabs</SideRow>
        <SideRow $pl={6} $gap={6} $bold $mt={22}>
          <TriDown />
          <I w={20} h={18} c="#c8c8c8" vb="0 0 20 18" sw={1.4}><path d="M1 17V1H8L10 4H16V7M1 17H15L19 7H5Z" fill="none" /></I>Assets
        </SideRow>
        <SideRow $pl={48}><Folder />Images</SideRow>
        <SideRow $pl={48} $sel><Folder />Prefabs</SideRow>
        <SideRow $pl={48}><Folder />Scenes</SideRow>
      </Side>
      <SideBar>
        <Svg $w={10} $h={7} $c="#c4c4c4" viewBox="0 0 10 7" fill="currentColor"><path d="M0 7H10L5 0Z" /></Svg>
        <SideThumb />
      </SideBar>
      <ProjMain>
        <ProjCrumb>
          Assets
          <I w={8} h={15} c="#7d7d7d" vb="0 0 8 15" sw={1.5}><path d="M1 1L7 7.5L1 14" /></I>
          <BoldSpan>Prefabs</BoldSpan>
        </ProjCrumb>
        <Thumbs>
          {['Expandabl...', 'Expandabl...', 'Item'].map((t, i) => (
            <Thumb key={i}><PrefabCube w={77} h={84} />{t}</Thumb>
          ))}
        </Thumbs>
        <ProjFoot />
      </ProjMain>
    </ProjBody>
  </Panel>
);

/* ---------- inspector ---------- */
const InspectorPanel = styled(Panel)` flex: none; `;
const InspLayout = styled.div` flex: 1; display: flex; min-height: 0; `;
const InspBody = styled.div` width: 768px; flex: none; position: relative; overflow: hidden; `;
const InspScroll = styled.div`
  flex: 1; background: #383838; border-left: 1px solid #2a2a2a; display: flex; flex-direction: column; align-items: center; padding-top: 9px;
`;
const ScrollThumb = styled.div` width: 12px; height: 998px; background: #5c5c5c; border-radius: 6px; margin: 270px 0 14px; flex: none; `;
const Row = styled.div`
  position: relative; height: ${p => p.$h ?? 30}px; display: flex; align-items: center; padding: 0 7px 0 30px;
  margin-top: ${p => p.$mt ?? 0}px; flex: none;
`;
const Label = styled.span`
  flex: none; width: ${p => (p.$in ? 274 : 297)}px; margin-left: ${p => (p.$in ? 23 : 0)}px; white-space: nowrap;
  color: ${p => p.$c || '#c4c4c4'}; font-weight: ${p => (p.$bold ? 600 : 400)}; letter-spacing: ${p => (p.$bold ? '.5px' : '.1px')};
`;
const Field = styled.span`
  height: 26px; flex: ${p => (p.$w ? 'none' : 1)}; width: ${p => (p.$w ? p.$w + 'px' : 'auto')}; background: #2a2a2a;
  border: 1px solid #212121; border-top-color: #0e0e0e; border-radius: 3px; display: flex; align-items: center; padding-left: 4px;
  color: ${p => p.$c || '#d2d2d2'}; font-weight: ${p => (p.$bold ? 600 : 400)}; letter-spacing: ${p => (p.$bold ? '.5px' : '.2px')};
  margin-left: ${p => p.$ml ?? 0}px;
`;
const Axis = styled.span`
  flex: none; width: ${p => p.$w}px; color: ${p => p.$c || '#c4c4c4'}; font-weight: ${p => (p.$bold ? 600 : 400)}; text-align: left; padding-left: ${p => p.$pad ?? 0}px;
`;
const Vec = styled.span` display: flex; align-items: center; margin-left: ${p => p.$ml}px; `;
const StubRow = styled.div` height: 9px; display: flex; padding-left: 340px; gap: 22px; flex: none; `;
const Stub = styled.span` width: 126px; height: 5px; background: #2a2a2a; border: 1px solid #212121; border-top: none; border-radius: 0 0 3px 3px; `;
const Sep = styled.div` height: 2px; background: #1a1a1a; margin-top: ${p => p.$mt ?? 0}px; flex: none; `;
const CompHead = styled.div`
  height: ${p => p.$h ?? 30}px; background: #3e3e3e; border-bottom: 1px solid #303030; display: flex; align-items: center;
  padding: 0 0 0 12px; flex: none; font-weight: 600; color: #c8c8c8; letter-spacing: .65px;
`;
const HeadIcon = styled.span` width: 22px; margin-left: 9px; flex: none; display: flex; justify-content: center; `;
const HeadCheck = styled.span` width: 30px; margin-left: 6px; flex: none; display: flex; `;
const HeadTools = styled.span` margin-left: auto; display: flex; align-items: center; gap: 16px; padding-right: 17px; `;
const KebabGap = styled.span` margin-left: 4px; display: flex; `;
const CheckWrap = styled.span` display: flex; align-items: center; gap: 5px; width: ${p => p.$w}px; flex: none; `;
const Dropdown = styled.span`
  flex: 1; height: 26px; background: #515151; border: 1px solid #2e2e2e; border-top-color: #5c5c5c; border-radius: 3px; display: flex; align-items: center; padding: 0 8px 0 4px;
  color: #d8d8d8;
`;
const ObjText = styled.span` margin-left: 2px; white-space: nowrap; `;
const ObjIcon = styled.span`
  width: 16px; height: 20px; flex: none; display: flex; align-items: center; justify-content: center;
  background: ${p => p.$bg || '#f4f4f4'}; color: #1e7a3a; font-size: 14px; font-weight: 700; border-radius: 1px; margin-left: 1px;
`;
const TIcon = styled.span`
  width: 18px; height: 20px; flex: none; border: 1px solid #29a5e6; color: #29a5e6; display: flex; align-items: center; justify-content: center;
  font-family: "Liberation Serif", serif; font-size: 18px;
`;
const Picker = styled.span`
  margin-left: auto; width: 28px; height: 24px; background: #333; display: flex; align-items: center; justify-content: center; flex: none; border-radius: 0 3px 3px 0;
`;
const ListBox = styled.div`
  margin: 2px 7px 0 30px; height: 190px; background: #414141; border: 1px solid #2a2a2a; border-radius: 3px 3px 0 0; padding-top: 4px;
  position: relative; flex: none;
`;
const ElemRow = styled.div`
  height: 30px; display: flex; align-items: center; padding: 0 9px 0 7px; flex: none; position: relative;
  background: ${p => (p.$sel ? '#4d4d4d' : 'none')}; font-weight: ${p => (p.$bold ? 600 : 400)};
`;
const DragGrip = styled.span` width: 16px; height: 7px; border-top: 1px solid #6b6b6b; border-bottom: 1px solid #6b6b6b; flex: none; `;
const ElemLabel = styled.span` flex: none; width: 249px; margin-left: 21px; letter-spacing: .35px; `;
const Foot = styled.div` height: 28px; display: flex; justify-content: flex-end; padding-right: 22px; flex: none; `;
const FootTab = styled.div`
  width: 85px; height: 28px; background: #3a3a3a; border: 1px solid #2a2a2a; border-top: none; border-radius: 0 0 4px 4px;
  display: flex; align-items: center; justify-content: center; gap: 24px; margin-top: 0;
`;
const ItemBar = styled.span`
  position: absolute; left: 0; top: ${p => p.$t}px; height: ${p => p.$h}px; width: 3px; background: #0a80c8;
`;
const Help = styled.div`
  margin: 2px 7px 0 30px; height: 56px; background: #383838; border: 1px solid #232323; border-radius: 3px; display: flex; align-items: center; gap: 7px; padding-left: 7px;
  font-size: 15.3px; line-height: 18px; color: #a8a8a8; flex: none; white-space: nowrap;
`;
const AddComp = styled.div`
  margin: 12px auto 0; width: 342px; height: 26px; background: #515151; border: 1px solid #2e2e2e; border-radius: 3px 3px 0 0; color: #d8d8d8;
  display: flex; justify-content: center; padding-top: 4px; transform: translateX(-1px); flex: none;
`;
const DarkBar = styled.div` height: 4px; background: #1e1e1e; flex: none; margin-top: -3px; position: relative; `;
const LayoutHead = styled.div` height: 14px; display: flex; align-items: flex-start; padding-left: 15px; font-weight: 600; gap: 8px; color: #c4c4c4; overflow: hidden; line-height: 22px; `;
const HeadRule = styled.span` flex: 1; height: 1px; background: #5c5c5c; margin: 3px 14px 0 0; `;
const InlineArrow = styled.span` position: absolute; left: 12px; top: 9px; display: flex; `;

const CheckMark = ({ size = 14 }) => (
  <I w={size} h={size} c="#e8e8e8" vb="0 0 14 14" sw={2}><path d="M2 7.5L5.5 11.5L12 2.5" /></I>
);
const CheckBox = ({ on }) => <SmallCheck>{on && <CheckMark />}</SmallCheck>;
const PickerDot = ({ c = '#c4c4c4' }) => (
  <I w={15} h={15} c={c} vb="0 0 15 15" sw={1.2}><circle cx="7.5" cy="7.5" r="6.5" /><circle cx="7.5" cy="7.5" r="2" fill="currentColor" stroke="none" /></I>
);
const CompTools = () => (
  <HeadTools>
    <Svg $w={14} $h={18} $c="#d8d8d8" viewBox="0 0 14 18"><ellipse cx="7" cy="9" rx="7" ry="9" fill="currentColor" /><path d="M4.5 7A2.5 2.5 0 1 1 7 10V11.5M7 13V15" stroke="#3e3e3e" strokeWidth="1.8" fill="none" /></Svg>
    <I w={16} h={18} c="#c4c4c4" vb="0 0 16 18" sw={1.3}><path d="M0 6H16M0 12H16M11 2V9M5 9V16" /></I>
    <KebabGap><Kebab /></KebabGap>
  </HeadTools>
);
const ImageGlyph = () => (
  <I w={17} h={17} c="#c4c4c4" vb="0 0 17 17" sw={1.2}>
    <rect x="2" y="2" width="13" height="13" /><path d="M2 13L7 8L15 14" /><circle cx="11" cy="6" r="1.5" /><path d="M0 0H3V3H0ZM14 0H17V3H14ZM0 14H3V17H0ZM14 14H17V17H14Z" fill="currentColor" stroke="none" />
  </I>
);
const ObjField = ({ icon, text, c, bold, ml, picker }) => (
  <Field $ml={ml} $c={c} $bold={bold}>
    {icon}
    <ObjText>{text}</ObjText>
    <Picker><PickerDot c={picker} /></Picker>
  </Field>
);
const Hash = ({ bg }) => <ObjIcon $bg={bg}>#</ObjIcon>;
const elements = [
  ['Element 0', 'Brightness (Item Controller)'], ['Element 1', 'Font (Item Controller)'], ['Element 2', 'ScreenTimeout (Item Controller)'],
  ['Element 3', 'Touch (Item Controller)', 1], ['Element 4', 'ScreenSaver (Item Controller)', 1], ['Element 5', 'ScreenSaver (1) (Item Controller)', 1, 1],
];
const Inspector = () => (
  <InspectorPanel $w={787}>
    <TabBar $pr={14}>
      <Tab $w={144} $on $gap={6} $pl={14}>
        <Svg $w={15} $h={17} $c="#c8c8c8" viewBox="0 0 15 17"><ellipse cx="7.5" cy="8.5" rx="7.5" ry="8.5" fill="currentColor" /><path d="M7.5 3.5V5.5M7.5 7.5V13.5" stroke="#3c3c3c" strokeWidth="2.6" /></Svg>
        Inspector
      </Tab>
      <TabTools><Lock /><Kebab /></TabTools>
    </TabBar>
    <InspLayout>
      <InspBody>
        <StubRow><Stub /><Stub /></StubRow>
        <Row>
          <Label $in $bold>Max</Label>
          <Vec $ml={-4}>
            <Axis $w={17} $c="#777">X</Axis><Field $w={126} $c="#777">0</Field>
            <Axis $w={22} $c="#777" $pad={5}>Y</Axis><Field $w={126} $c="#777">1</Field>
          </Vec>
        </Row>
        <Row $mt={3}>
          <Label $bold>Pivot</Label>
          <Vec $ml={-4}>
            <Axis $w={17} $bold>X</Axis><Field $w={126} $bold>0</Field>
            <Axis $w={22} $bold $pad={5}>Y</Axis><Field $w={126} $bold>1</Field>
          </Vec>
        </Row>
        <Row $mt={12}>
          <Label $bold>Rotation</Label>
          <Vec $ml={0}>
            <Axis $w={24} $bold>X</Axis><Field $w={116} $bold>0</Field>
            <Axis $w={31} $bold $pad={8}>Y</Axis><Field $w={116} $bold>0</Field>
            <Axis $w={31} $bold $pad={8}>Z</Axis><Field $w={116} $bold>0</Field>
          </Vec>
        </Row>
        <Row>
          <Label $c="#bdbdbd">Scale</Label>
          <Vec $ml={-28}>
            <I w={18} h={18} c="#bdbdbd" vb="0 0 18 18" sw={1.4}><path d="M8 5H5A4 4 0 0 0 5 13H7M10 5H13A4 4 0 0 1 13 13H10M5 1L13 17" /></I>
            <Axis $w={34} $pad={10}>X</Axis><Field $w={116}>1</Field>
            <Axis $w={31} $pad={8}>Y</Axis><Field $w={116}>1</Field>
            <Axis $w={31} $pad={8}>Z</Axis><Field $w={116}>1</Field>
          </Vec>
        </Row>

        <Sep $mt={13} />
        <CompHead>
          <TriDown />
          <HeadIcon>
            <I w={22} h={22} c="#c4c4c4" vb="0 0 22 22" sw={1.3}><ellipse cx="11" cy="11" rx="10" ry="10" /><circle cx="11" cy="11" r="5" /><circle cx="11" cy="11" r="1.8" fill="currentColor" /></I>
          </HeadIcon>
          <HeadCheck />
          Canvas Renderer
          <CompTools />
        </CompHead>
        <Row $mt={5}><Label $c="#c4c4c4">Cull Transparent Mesh</Label><CheckBox on /></Row>
        <Sep $mt={11} />
        <CompHead>
          <TriDown />
          <HeadIcon>
            <I w={18} h={22} c="#c4c4c4" vb="0 0 18 22" sw={1.2}><rect x="1" y="1" width="16" height="20" rx="2" /><path d="M4 6H14M4 11H14M4 16H14" strokeWidth="2.4" /></I>
          </HeadIcon>
          <HeadCheck><CheckBox on /></HeadCheck>
          Vertical Layout Group
          <CompTools />
        </CompHead>
        <Row $mt={6}><InlineArrow><TriDown /></InlineArrow><Label $c="#c4c4c4">Padding</Label></Row>
        {['Left', 'Right', 'Top', 'Bottom'].map(t => (
          <Row key={t}><Label $in>{t}</Label><Field>0</Field></Row>
        ))}
        <Row><Label>Spacing</Label><Field>0</Field></Row>
        <Row><Label>Child Alignment</Label><Dropdown>Upper Left<PushRight><Caret w={10} h={8} /></PushRight></Dropdown></Row>
        <Row><Label>Reverse Arrangement</Label><CheckBox /></Row>
        <Row><Label>Control Child Size</Label><CheckWrap $w={146}><CheckBox on />Width</CheckWrap><CheckWrap $w={100}><CheckBox on />Height</CheckWrap></Row>
        <Row><Label>Use Child Scale</Label><CheckWrap $w={146}><CheckBox />Width</CheckWrap><CheckWrap $w={100}><CheckBox />Height</CheckWrap></Row>
        <Row><Label>Child Force Expand</Label><CheckWrap $w={146}><CheckBox on />Width</CheckWrap><CheckWrap $w={100}><CheckBox />Height</CheckWrap></Row>
        <Sep $mt={12} />
        <CompHead>
          <TriDown />
          <HeadIcon><ObjIcon>#</ObjIcon></HeadIcon>
          <HeadCheck><CheckBox on /></HeadCheck>
          Expandable Section Controller (Script)
          <CompTools />
        </CompHead>
        <Row $mt={6}>
          <Label $c="#6f6f6f">Script</Label>
          <ObjField icon={<Hash bg="#8c8c8c" />} text="ExpandableSectionController" c="#7c7c7c" picker="#6f6f6f" />
        </Row>
        <Row><Label>Background</Label><ObjField icon={<ImageGlyph />} text="Title (Image)" /></Row>
        <Row><Label>Arrow Icon</Label><ObjField icon={<ImageGlyph />} text="Arrow (Image)" /></Row>
        <Row><Label>Section Title</Label><ObjField icon={<TIcon>T</TIcon>} text="Text (Text Mesh Pro UGUI)" /></Row>
        <Row><Label>Arrow</Label><ObjField icon={<Svg $w={17} $h={17} $c="#bdbdbd" viewBox="0 0 17 17" fill="currentColor"><circle cx="8.5" cy="8.5" r="8" /></Svg>} text="Title (Button)" /></Row>
        <Row><Label>Arrow Custom Animator</Label><ObjField icon={<Hash />} text="Arrow (Custom Animator)" /></Row>
        <Row $mt={1}>
          <ItemBar $t={0} $h={26} />
          <InlineArrow><TriDown /></InlineArrow>
          <Label $bold>Item Controllers</Label>
          <Field $w={71} $ml={363} $bold>6</Field>
        </Row>
        <ListBox>
          {elements.map(([l, v, b, sel], i) => (
            <ElemRow key={i} $bold={b} $sel={sel}>
              <DragGrip />
              <ElemLabel>{l}</ElemLabel>
              <ObjField icon={<Hash />} text={v} bold={b} />
              {sel && <RedBox $l={-1} $r={-5} $t={-5} $b={-12} />}
            </ElemRow>
          ))}
        </ListBox>
        <Foot>
          <FootTab>
            <I w={14} h={14} c="#c4c4c4" vb="0 0 14 14" sw={2.4}><path d="M7 0V14M0 7H14" /></I>
            <I w={12} h={12} c="#c4c4c4" vb="0 0 12 12" sw={2.4}><path d="M0 6H12" /></I>
          </FootTab>
        </Foot>
        <Row $mt={4}><Label>Is Collapsed</Label><CheckBox /></Row>
        <Sep $mt={12} />
        <CompHead $h={29}>
          <TriDown />
          <HeadIcon>
            <Svg $w={22} $h={22} $c="#c8c8c8" viewBox="0 0 22 22" fill="currentColor"><rect x="7" y="5" width="8" height="12" /><rect x="1" y="10" width="2" height="2" /><rect x="19" y="10" width="2" height="2" /><rect x="10" y="0" width="2" height="2" /><rect x="10" y="20" width="2" height="2" /></Svg>
          </HeadIcon>
          <HeadCheck><CheckBox on /></HeadCheck>
          Content Size Fitter
          <CompTools />
        </CompHead>
        <Row $mt={6}><Label>Horizontal Fit</Label><Dropdown>Unconstrained<PushRight><Caret w={10} h={8} /></PushRight></Dropdown></Row>
        <Row><Label>Vertical Fit</Label><Dropdown>Min Size<PushRight><Caret w={10} h={8} /></PushRight></Dropdown></Row>
        <Help>
          <Svg $w={39} $h={39} viewBox="0 0 39 39">
            <path d="M19.5 1L38 37.5H1Z" fill="#ffc107" stroke="#ffc107" strokeWidth="1.5" strokeLinejoin="round" />
            <path d="M19.5 11V26" stroke="#3a3a3a" strokeWidth="3.5" /><circle cx="19.5" cy="31.5" r="2.4" fill="#3a3a3a" />
          </Svg>
          <span>Parent has a type of layout group component. A child of a layout group should not have a<br />Content Size Fitter component, since it should be driven by the layout group.</span>
        </Help>
        <Sep $mt={15} />
        <AddComp>Add Component</AddComp>
        <DarkBar />
        <LayoutHead>Layout Properties<HeadRule /></LayoutHead>
      </InspBody>
      <InspScroll>
        <Svg $w={11} $h={8} $c="#c4c4c4" viewBox="0 0 10 7" fill="currentColor"><path d="M0 7H10L5 0Z" /></Svg>
        <ScrollThumb />
        <Caret w={11} h={8} />
      </InspScroll>
    </InspLayout>
  </InspectorPanel>
);

/* ---------- callout ---------- */
const Callout = styled.div`
  position: absolute; left: 761px; top: 1127px; width: 1025px; height: 98px; background: #fff; z-index: 10;
  color: #ed1c24; font-family: Lato, "Open Sans", sans-serif; font-weight: 700; font-size: 67.5px; line-height: 90px; white-space: nowrap;
`;

export default function App() {
  return (
    <Root>
      <GlobalStyle />
      <TitleBar>
        <Svg $w={22} $h={24} viewBox="0 0 22 24">
          <path d="M11 1L21 6.5V17.5L11 23L1 17.5V6.5Z" fill="#3a3a3a" />
          <path d="M11 6L16 9V15L11 18L6 15V9ZM6 9L11 12L16 9M11 12V18" fill="none" stroke="#eee" strokeWidth="1.5" />
        </Svg>
        expandable-section-controller - ExpandableSectionScene - Android - Unity 2021.3.1f1* &lt;DX11&gt;
        <WinControls>
          <I w={14} h={2} c="#111" vb="0 0 14 2" sw={2}><path d="M0 1H14" /></I>
          <I w={15} h={15} c="#111" vb="0 0 15 15" sw={1}><rect x="1" y="3.5" width="10.5" height="10.5" /><path d="M4 3.5V1H14V11H11.5" /></I>
          <I w={16} h={16} c="#111" vb="0 0 16 16" sw={1}><path d="M1 1L15 15M15 1L1 15" /></I>
        </WinControls>
      </TitleBar>
      <MenuBar>
        {['File', 'Edit', 'Assets', 'GameObject', 'Component', 'Window', 'Help'].map(m => <span key={m}>{m}</span>)}
      </MenuBar>
      <MainToolbar>
        <ToolGroup $w={1198}>
          <ToolBtn $w={88} $start>
            <Svg $w={19} $h={19} $c="#c4c4c4" viewBox="0 0 20 20"><circle cx="10" cy="10" r="10" fill="currentColor" /><circle cx="10" cy="7.5" r="3.5" fill="#383838" /><path d="M3.5 17A7 6 0 0 1 16.5 17Z" fill="#383838" /></Svg>
            TS
            <PushRight><Caret w={10} h={7} /></PushRight>
          </ToolBtn>
          <ToolBtn $w={46}>
            <Svg $w={20} $h={14} $c="#c4c4c4" viewBox="0 0 20 14" fill="currentColor"><path d="M5 14A4 4 0 0 1 4 6A6 6 0 0 1 15.5 5A4.5 4.5 0 0 1 15.5 14Z" /></Svg>
          </ToolBtn>
          <ToolBtn $w={45}>
            <I w={20} h={22} c="#c4c4c4" vb="0 0 20 22" sw={1.5}><path d="M10 1L19 6V14L15 16M10 1L1 6V14L5 16" /><path d="M7 20V8H12A3.5 3.5 0 0 1 12 15H8" /></I>
          </ToolBtn>
        </ToolGroup>
        <ToolGroup $gap={1}>
          <ToolBtn $w={46}><Svg $w={12} $h={14} $c="#c4c4c4" viewBox="0 0 12 14" fill="currentColor"><path d="M0 0L12 7L0 14Z" /></Svg></ToolBtn>
          <ToolBtn $w={47}><Svg $w={10} $h={14} $c="#c4c4c4" viewBox="0 0 10 14" fill="currentColor"><rect width="3.5" height="14" /><rect x="6.5" width="3.5" height="14" /></Svg></ToolBtn>
          <ToolBtn $w={47} $bg="#2e2e2e"><Svg $w={13} $h={14} $c="#a8a8a8" viewBox="0 0 13 14" fill="currentColor"><path d="M0 0L9 7L0 14Z" /><rect x="10.5" width="2" height="14" /></Svg></ToolBtn>
        </ToolGroup>
        <ToolGroup $auto>
          <ToolBtn $w={47}>
            <I w={20} h={20} c="#c4c4c4" vb="0 0 20 20" sw={1.5}><path d="M5 3A8 8 0 1 1 2 10M2 1V5H6M10 6V10H7" /></I>
          </ToolBtn>
          <ToolBtn $w={47}><Search size={20} strokeWidth={1.4} /></ToolBtn>
          <ToolBtn $w={116} $start $pad={4}>Layers<PushRight><Caret w={9} h={7} /></PushRight></ToolBtn>
          <ToolBtn $w={117} $start $pad={4}>Layout<PushRight><Caret w={9} h={7} /></PushRight></ToolBtn>
        </ToolGroup>
      </MainToolbar>
      <Workspace>
        <LeftCol>
          <TopRow>
            <Hierarchy />
            <Scene />
            <Simulator />
          </TopRow>
          <Project />
        </LeftCol>
        <Inspector />
      </Workspace>
      <Callout>Add the new section item here -&gt;</Callout>
    </Root>
  );
}
